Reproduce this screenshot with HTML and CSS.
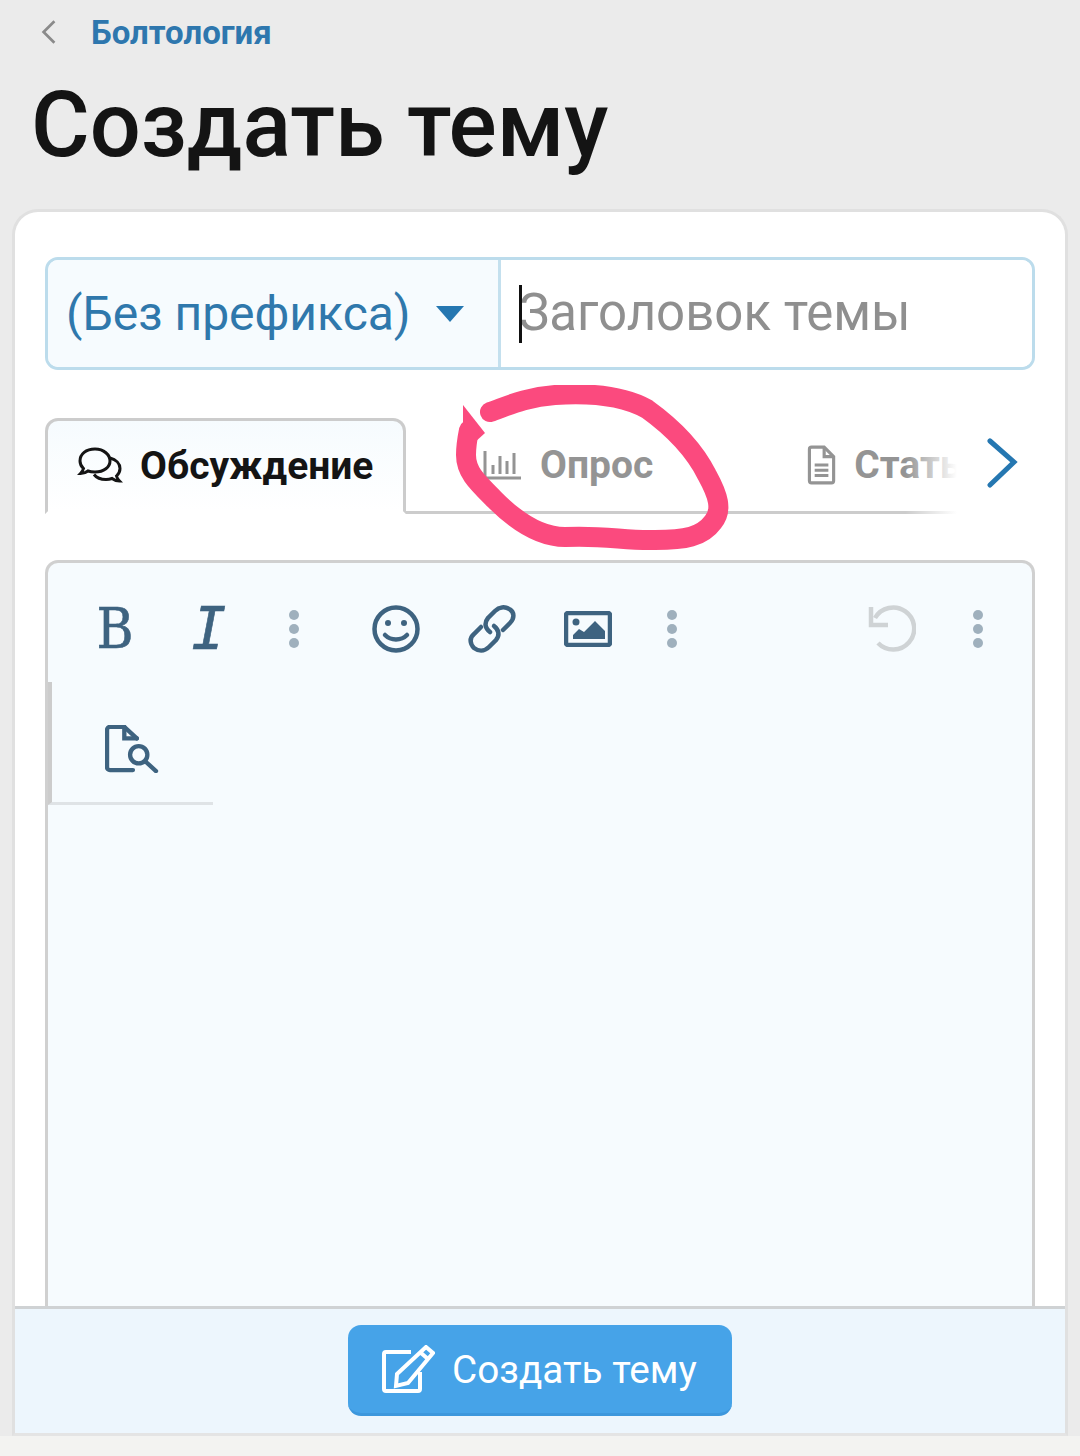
FILE: index.html
```html
<!DOCTYPE html>
<html lang="ru">
<head>
<meta charset="utf-8">
<title>Создать тему</title>
<link rel="stylesheet" href="styles.css">
</head>
<body>
<div class="page">
  <nav class="crumb">
    <svg class="crumb-arrow" viewBox="0 0 20 30"><path d="M16 3 L4 15 L16 27"/></svg>
    <a class="crumb-link">Болтология</a>
  </nav>
  <h1 class="title">Создать тему</h1>
  <main class="card">
    <div class="card-body">
      <div class="title-row">
        <div class="prefix">
          <span class="prefix-text">(Без префикса)</span>
          <svg class="prefix-caret" viewBox="0 0 30 18"><path d="M1 1 H29 L15 17 Z"/></svg>
        </div>
        <div class="title-input">
          <span class="text-cursor"></span>
          <span class="placeholder">Заголовок темы</span>
        </div>
      </div>
      <div class="tabs">
        <div class="tab tab-active">
          <svg class="tab-icon icon-comments" viewBox="0 0 46 40"><path d="M18 3C9 3 3 8 3 15c0 3 1.300 5.500 3.500 7.500-.5 2-1.500 3.500-3 5 3 0 5.500-1 7.500-2.500 2 .7 4.500 1 7 1 9 0 15-5 15-11S27 3 18 3Z"/><path d="M33 12c6 1.500 10 5.500 10 10.500 0 3-1.300 5.500-3.500 7.500.5 2 1.500 3.500 3 5-3 0-5.500-1-7.500-2.500-2 .7-4 1-6 1-5 0-9.500-1.800-12-5"/></svg>
          <span>Обсуждение</span>
        </div>
        <div class="tab tab-poll">
          <svg class="tab-icon icon-poll" viewBox="0 0 38 30"><path d="M2 1V28H38"/><path d="M10 15V24M17 6V24M24 11V24M31 3V24"/></svg>
          <span>Опрос</span>
        </div>
        <div class="tab tab-article">
          <svg class="tab-icon icon-file" viewBox="0 0 28 38"><path d="M3 4a2 2 0 0 1 2-2H17L26 11V34a2 2 0 0 1-2 2H5a2 2 0 0 1-2-2Z"/><path d="M17 2V11H26"/><path d="M8 19H21M8 24H21M8 29H21"/></svg>
          <span>Статья</span>
        </div>
        <div class="tabs-fade"></div>
        <svg class="tabs-next" viewBox="0 0 32 50"><path d="M4 3 L28 24 L4 47"/></svg>
      </div>
      <section class="editor">
        <div class="tool-row">
          <span class="tool tool-b">B</span>
          <span class="tool tool-i">I</span>
          <span class="tool tool-dots"><i></i><i></i><i></i></span>
          <span class="tool tool-icon tool-smile">
            <svg viewBox="0 0 48 48"><circle cx="24" cy="24" r="21.500"/><path d="M13 30c6 6 16 6 22 0"/><circle class="fill" cx="16" cy="18" r="3"/><circle class="fill" cx="32" cy="18" r="3"/></svg>
          </span>
          <span class="tool tool-icon">
            <svg viewBox="0 0 48 48"><path d="M35 25L42 18C47 13 46 7 42 4.500C37 1 31 2 27 6L20 13C16 18 17 23 22 27"/><path d="M26 21C31 25 32 30 28 35L21 42C16 47 10 46 6 43C2 39 1 33 6 29L13 22"/></svg>
          </span>
          <span class="tool tool-icon">
            <svg class="img-icon" viewBox="0 0 48 36"><rect x="2" y="2" width="44" height="32" rx="2"/><circle class="fill" cx="12" cy="11" r="3.500"/><path class="fill" d="M9 28V24L15 18L20 21L31 10L41 20V28Z"/></svg>
          </span>
          <span class="tool tool-dots tool-dots-b"><i></i><i></i><i></i></span>
          <span class="tool tool-icon tool-undo">
            <svg viewBox="0 0 48 48"><path d="M3 2V20H20"/><path d="M7 13A21 21 0 1 1 10 38"/></svg>
          </span>
          <span class="tool tool-dots tool-dots-c"><i></i><i></i><i></i></span>
        </div>
        <div class="tool-row2">
          <span class="tool tool-icon">
            <svg class="preview-icon" viewBox="0 0 56 50"><path d="M29 47H5a3 3 0 0 1-3-3V5a3 3 0 0 1 3-3H20L33 14"/><path d="M20 2V14H33"/><circle cx="35" cy="31" r="9"/><path d="M42 38L53 48"/></svg>
          </span>
        </div>
      </section>
    </div>
    <footer class="submit-bar">
      <button class="submit-btn">
        <svg viewBox="0 0 54 48"><path d="M30 7H5a2 2 0 0 0-2 2V44a2 2 0 0 0 2 2H37a2 2 0 0 0 2-2V27"/><path d="M45 2L52 8L27 38L15 41L16 29Z"/><path d="M40 8L47 14"/></svg>
        <span>Создать тему</span>
      </button>
    </footer>
  </main>
  <div class="page-foot"></div>
</div>
<svg class="scribble" viewBox="0 0 300 190">
  <path class="scribble-tip" d="M8 20 L8 68 L30 48 Z"/>
  <path class="scribble-line" d="M35 27C50 22 70 12 100 10C130 8 165 9 192 24C217 42 238 62 252 90C263 110 268 125 258 137C247 152 230 155 200 155C170 156 150 150 110 152C85 152 60 135 40 115C22 97 11 87 11 70C11 62 12 55 14 45"/>
</svg>
</body>
</html>
```
FILE: styles.css
```css
* { box-sizing: border-box; }
html, body { margin: 0; padding: 0; }
body {
  position: relative;
  width: 1080px;
  height: 1456px;
  overflow: hidden;
  background: #ebebeb;
  font-family: Roboto, "Liberation Sans", sans-serif;
  color: #141414;
}
.page { display: flex; flex-direction: column; height: 1456px; }

.crumb { display: flex; align-items: center; height: 64px; padding-left: 40px; gap: 33px; }
.crumb-arrow { width: 18px; height: 28px; fill: none; stroke: #8a8a8a; stroke-width: 3; }
.crumb-link { font-size: 33px; font-weight: 700; color: #2e77ae; }

.title {
  margin: 0;
  height: 145px;
  padding-left: 31px;
  font-size: 90px;
  line-height: 124px;
  font-weight: 500;
  color: #141414;
}

.card {
  flex: 1;
  margin: 0 12px;
  display: flex;
  flex-direction: column;
  min-height: 0;
  background: #fff;
  border: 3px solid #e0e0e0;
  border-bottom: 3px solid #e4e4e4;
  border-radius: 26px 26px 0 0;
  overflow: hidden;
}
.card-body {
  flex: 1;
  min-height: 0;
  padding: 45px 30px 0;
  display: flex;
  flex-direction: column;
  overflow: hidden;
}

.title-row {
  flex: none;
  display: flex;
  height: 113px;
  border: 3px solid #bcdcec;
  border-radius: 13px;
  overflow: hidden;
}
.prefix {
  width: 453px;
  display: flex;
  align-items: center;
  padding-left: 18px;
  background: #f6fbfe;
  border-right: 3px solid #c4e0ee;
}
.prefix-text { font-size: 48px; color: #2f78ac; white-space: nowrap; }
.prefix-caret { width: 30px; height: 18px; margin-left: 24px; fill: #2577b1; }
.title-input {
  position: relative;
  flex: 1;
  display: flex;
  align-items: center;
  padding: 0 0 3px 18px;
  background: #fff;
}
.placeholder { font-size: 51px; color: #8f8f8f; white-space: nowrap; }
.text-cursor { position: absolute; left: 18px; top: 25px; width: 3px; height: 58px; background: #111; }

.tabs {
  position: relative;
  flex: none;
  display: flex;
  height: 96px;
  margin-top: 48px;
  border-bottom: 3px solid #ccc;
}
.tab {
  display: flex;
  align-items: center;
  height: 93px;
  font-size: 39px;
  font-weight: 700;
  color: #949494;
  white-space: nowrap;
}
.tab-active {
  width: 361px;
  height: 96px;
  padding-left: 29px;
  gap: 17px;
  color: #141414;
  background: linear-gradient(#f6fbfe, #fff);
  border: 3px solid #ccc;
  border-bottom: 3px solid #fff;
  border-radius: 13px 13px 0 0;
}
.tab-poll { margin-left: 77px; gap: 19px; }
.tab-article { margin-left: 153px; gap: 18px; }
.tab-icon { fill: none; flex: none; }
.icon-comments { width: 46px; height: 40px; stroke: #141414; stroke-width: 3; }
.icon-poll { width: 38px; height: 30px; stroke: #949494; stroke-width: 3; }
.icon-file { width: 30px; height: 40px; stroke: #949494; stroke-width: 3; }
.tabs-fade {
  position: absolute;
  left: 860px;
  right: 0;
  top: 0;
  height: 99px;
  background: linear-gradient(90deg, rgba(255,255,255,0), #fff 40%);
}
.tabs-next {
  position: absolute;
  left: 941px;
  top: 20px;
  width: 32px;
  height: 50px;
  fill: none;
  stroke: #2577b1;
  stroke-width: 5;
  stroke-linecap: round;
}

.editor {
  flex: 1;
  min-height: 0;
  margin-top: 46px;
  background: #f6fbfe;
  border: 3px solid #d0d0d0;
  border-bottom: 0;
  border-radius: 13px 13px 0 0;
}
.tool-row { display: flex; align-items: center; height: 119px; padding: 12px 0 0 20px; }
.tool { display: flex; align-items: center; justify-content: center; width: 94px; height: 60px; flex: none; color: #3e6380; }
.tool-icon { width: 96px; }
.tool-icon svg { width: 48px; height: 48px; fill: none; stroke: #3e6380; stroke-width: 4.500; stroke-linecap: round; }
.tool-icon svg .fill { fill: #3e6380; stroke: none; }
.tool-icon .img-icon { height: 36px; }
.tool-icon .preview-icon { width: 54px; height: 48px; }
.tool-b { font-family: "DejaVu Serif", serif; font-size: 56px; line-height: 60px; -webkit-text-stroke: .6px #3e6380; transform: scaleX(.9); }
.tool-i { font-family: "DejaVu Sans Mono", monospace; font-style: italic; font-size: 58px; line-height: 60px; -webkit-text-stroke: .6px #3e6380; }
.tool-dots { flex-direction: column; gap: 4px; width: 76px; }
.tool-dots i { display: block; width: 10px; height: 10px; border-radius: 50%; background: #9fb0bd; }
.tool-smile { margin-left: 16px; }
.tool-dots-b { width: 72px; }
.tool-undo { margin-left: 136px; }
.tool-undo svg { stroke: #cfd3d5; stroke-linecap: butt; }
.tool-dots-c { width: 72px; margin-left: 2px; }

.tool-row2 {
  display: flex;
  align-items: center;
  width: 165px;
  height: 123px;
  border-left: 4px solid #ccc;
  border-bottom: 3px solid #dfe3e6;
  padding: 13px 0 0 32px;
}

.submit-bar {
  flex: none;
  height: 127px;
  display: flex;
  justify-content: center;
  padding-top: 16px;
  background: #edf6fd;
  border-top: 3px solid #cfd2d4;
}
.submit-btn {
  width: 384px;
  height: 91px;
  display: flex;
  align-items: center;
  gap: 17px;
  padding: 0 0 0 33px;
  background: #46a3e8;
  border: 0;
  border-bottom: 3px solid #3d97dc;
  border-radius: 13px;
  color: #fff;
  font-family: inherit;
  font-size: 38.700px;
}
.submit-btn svg { width: 54px; height: 48px; fill: none; stroke: #fff; stroke-width: 4; flex: none; }

.page-foot { flex: none; height: 20px; background: #f3f3f1; }

.scribble { position: absolute; left: 455px; top: 385px; width: 300px; height: 190px; }
.scribble-tip { fill: #fb4a7e; }
.scribble-line { fill: none; stroke: #fb4a7e; stroke-width: 20; stroke-linecap: round; stroke-linejoin: round; }
```
